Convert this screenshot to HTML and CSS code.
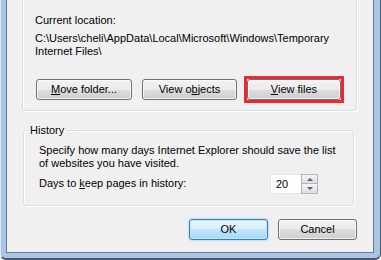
FILE: index.html
```html
<!DOCTYPE html>
<html lang="en">
<head>
  <meta charset="UTF-8" />
  <title>Temporary Internet Files and History Settings</title>
  <link rel="stylesheet" href="styles.css">
</head>
<body>
  <div class="window">
    <div class="client">

      <div class="group group-files">
        <p class="label">Current location:</p>
        <p class="path">C:\Users\cheli\AppData\Local\Microsoft\Windows\Temporary<br>Internet Files\</p>
        <div class="button-row">
          <button class="btn btn-move"><u>M</u>ove folder...</button>
          <button class="btn btn-objects">View o<u>b</u>jects</button>
          <span class="highlight">
            <button class="btn btn-files"><u>V</u>iew files</button>
          </span>
        </div>
      </div>

      <fieldset class="group group-history">
        <legend>History</legend>
        <div class="history-body">
          <p class="hint">Specify how many days Internet Explorer should save the list<br>of websites you have visited.</p>
          <div class="days-row">
            <span>Days to <u>k</u>eep pages in history:</span>
            <div class="spin">
              <span class="spin-value">20</span>
              <div class="spin-buttons">
                <span class="spin-btn up"></span>
                <span class="spin-btn down"></span>
              </div>
            </div>
          </div>
        </div>
      </fieldset>

      <div class="dialog-buttons">
        <button class="btn btn-dialog default">OK</button>
        <button class="btn btn-dialog">Cancel</button>
      </div>

    </div>
  </div>
</body>
</html>
```
FILE: styles.css
```css
* {
  margin: 0;
  padding: 0;
  box-sizing: border-box;
}
body {
  font-family: 'Liberation Sans', Arial, sans-serif;
  font-size: 11px;
  line-height: 13px;
  color: #000;
  background: #fff;
}
u {
  text-decoration: underline;
  text-underline-offset: 1px;
}
.window {
  width: 381px;
  height: 260px;
  background: #a9c6e8;
  border-left: 1px solid #dde9f6;
  border-right: 1px solid #4b5766;
  border-bottom: 2px solid #4b5766;
  border-radius: 0 0 6px 6px;
  padding: 0 6px 5px 5px;
}
.client {
  height: 100%;
  background: #f0f0f0;
  border: 1px solid #6e7a89;
  border-top: none;
  overflow: hidden;
  display: flex;
  flex-direction: column;
}
.group {
  border: 1px solid #d5dfe5;
  border-radius: 3px;
  box-shadow: inset 1px 1px 0 #fff, 1px 1px 0 #fff;
}
.group-files {
  margin: -10px 16px 0 15px;
  padding: 23px 0 10px 12px;
}
.path {
  margin-top: 5px;
}
.button-row {
  display: flex;
  gap: 10px;
  margin: 21px 0 0 1px;
}
.btn {
  font-family: inherit;
  font-size: 11px;
  line-height: 13px;
  color: #000;
  height: 21px;
  border: 1px solid #707070;
  border-radius: 3px;
  background: linear-gradient(#f2f2f2 0%, #ebebeb 50%, #dddddd 50%, #cfcfcf 100%);
  box-shadow: inset 0 0 0 1px rgba(255, 255, 255, 0.7);
  text-align: center;
}
.btn-move { width: 96px; }
.btn-objects { width: 95px; }
.btn-files { width: 94px; display: block; }
.highlight {
  display: block;
  margin: -3px;
  border: 3px solid #ea2a30;
}
.group-history {
  margin: 13px 19px 0 16px;
  padding: 0;
  min-width: 0;
}
.group-history legend {
  margin-left: 4px;
  padding: 0 2px;
}
.history-body {
  padding: 7px 0 11px 15px;
}
.days-row {
  display: flex;
  align-items: center;
  height: 21px;
  margin-top: 3px;
}
.spin {
  margin: 0 35px 0 auto;
  width: 48px;
  height: 20px;
  background: #fff;
  border: 1px solid #e2e5ea;
  display: flex;
  align-items: stretch;
}
.spin-value {
  flex: 1;
  padding: 3px 0 0 5px;
}
.spin-buttons {
  width: 17px;
  display: flex;
  flex-direction: column;
  border-left: 1px solid #b5b5b5;
  border-right: 1px solid #b5b5b5;
  margin: -1px -1px -1px 0;
}
.spin-btn {
  flex: 1;
  position: relative;
  border-top: 1px solid #b5b5b5;
  background: linear-gradient(#f6f6f6, #dedede);
}
.spin-btn.down {
  border-bottom: 1px solid #b5b5b5;
}
.spin-btn::after {
  content: '';
  position: absolute;
  left: 5px;
  top: 3px;
  border-left: 3px solid transparent;
  border-right: 3px solid transparent;
}
.spin-btn.up::after {
  border-bottom: 3px solid #4d5f84;
}
.spin-btn.down::after {
  border-top: 3px solid #4d5f84;
}
.dialog-buttons {
  display: flex;
  justify-content: flex-end;
  gap: 10px;
  margin-top: 13px;
  padding-right: 16px;
}
.btn-dialog { width: 79px; }
.btn.default {
  border-color: #3c7fb1;
  background: linear-gradient(#eaf6fd 0%, #d9f0fc 50%, #bee6fd 50%, #a7d9f5 100%);
  box-shadow: inset 0 0 0 1px #bde4f9, 0 0 2px #6fb6e6;
}
```
